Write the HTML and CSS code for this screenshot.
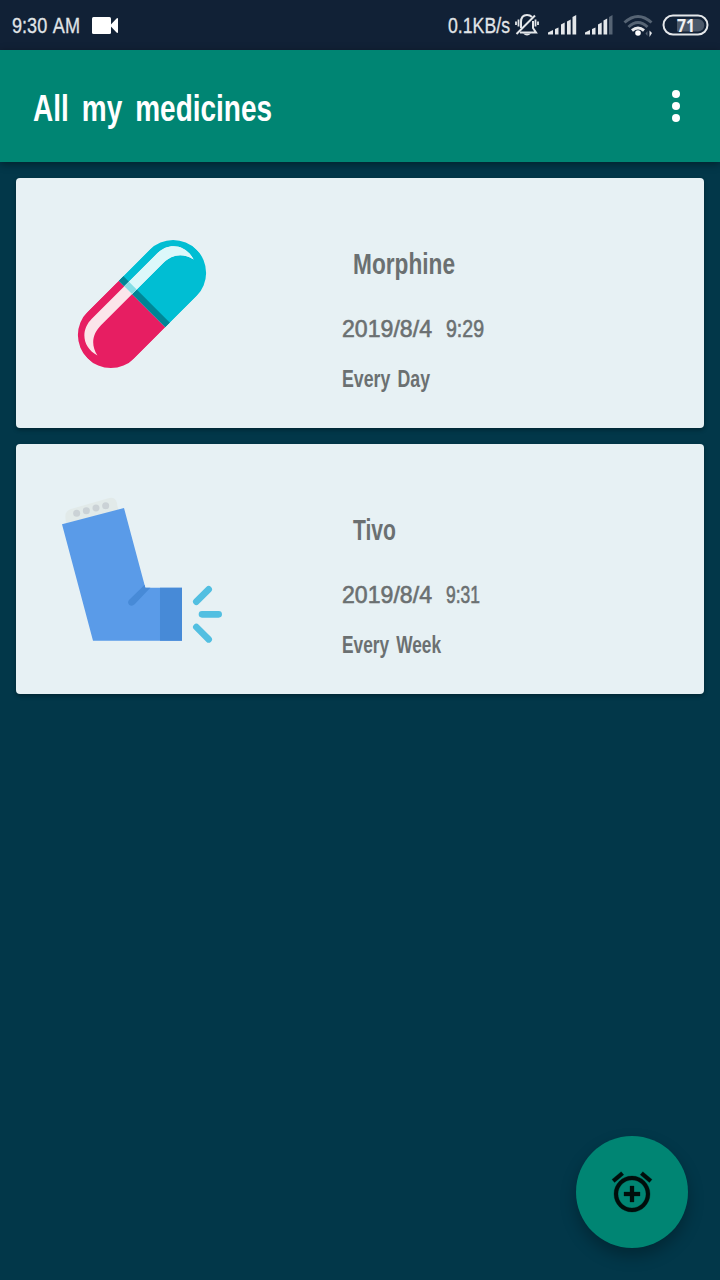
FILE: index.html
```html
<!DOCTYPE html>
<html lang="en">
<head>
<meta charset="utf-8">
<title>All my medicines</title>
<link rel="stylesheet" href="styles.css">
</head>
<body>
<div class="status-bar">
  <svg class="status-time" viewBox="0 0 69 50"><text x="0" y="33" textLength="68" lengthAdjust="spacingAndGlyphs">9:30 AM</text></svg>
  <svg class="camera" viewBox="0 0 26 17"><rect width="19" height="17" rx="1.5"/><path d="M18 8.5 24.5 1.5Q26 .5 26 2V15Q26 16.500 24.500 15.500Z"/></svg>
  <svg class="status-speed" viewBox="0 0 63 50"><text x="0" y="33" textLength="62" lengthAdjust="spacingAndGlyphs">0.1KB/s</text></svg>
  <svg class="status-icons" viewBox="512 0 200 50">
    <g fill="none" stroke="#e4e7ea" stroke-width="2">
      <path d="M516.500 34 535 15.500"/>
      <path d="M521 28V22Q521 15 527 15 530 15 532 17M533 21V28L536 32.500H520"/>
      <path d="M518.500 19.500V26.500M516 21.500V25M535.500 19.500V26.500M538 21.500V25" stroke-width="1.800"/>
    </g>
    <path d="M523 33.500h8q-4 4-8 0" fill="#e4e7ea"/>
    <g fill="#e4e7ea">
      <path d="M548 34.500V32.500L553 30V34.500ZM555 29l3.500-1.500v7H555ZM561 24.500l3.700-2v12H561ZM567 21.500l3.700-2v15H567ZM572.500 17l3.700-2v19.500h-3.700Z"/>
      <path d="M585 34.500V32.500L590 30V34.500ZM592 29l3.500-1.500v7H592ZM598 24.500l3.700-2v12H598ZM603.500 20.500l3.700-2v16h-3.700Z"/>
      <path d="M609 17l3.500-2v19.500H609Z" fill="#566474"/>
    </g>
    <g fill="none" stroke-width="3">
      <path d="M624.500 22.500Q638 10.500 651.500 22.500M628.500 27Q638 18 647.500 27" stroke="#566474"/>
      <path d="M632 30.500Q638 25.500 644 30.500" stroke="#e9ebed"/>
    </g>
    <circle cx="638" cy="33" r="2.800" fill="#fff"/>
    <path d="M647.500 31v5l-2-2.500Z" fill="#566474"/><path d="M649.500 30.500v6.500l2.500-4Z" fill="#e4e7ea"/>
    <rect x="663.500" y="15.500" width="44" height="19" rx="9.500" fill="none" stroke="#e4e7ea" stroke-width="2"/>
    <path d="M677 19H698a6 6 0 0 1 0 12.500H677Z" fill="#4b5869"/>
    <text class="battery" x="677" y="31.500" textLength="18" lengthAdjust="spacingAndGlyphs">71</text>
  </svg>
</div>
<header class="app-bar">
  <svg class="title" viewBox="0 0 240 112"><text x="0" y="71" textLength="239" lengthAdjust="spacingAndGlyphs">All my medicines</text></svg>
  <div class="overflow-menu"><i class="dot"></i><i class="dot"></i><i class="dot"></i></div>
</header>
<main class="list">
  <article class="card">
    <svg class="art" viewBox="16 178 326 250">
      <defs><clipPath id="capsule"><rect x="-33" y="-77" width="66" height="154" rx="33"/></clipPath></defs>
      <g transform="translate(142 304) rotate(45)">
        <g clip-path="url(#capsule)">
          <rect x="-33" y="-77" width="66" height="77" fill="#00bed3"/>
          <rect x="-33" width="66" height="77" fill="#e71e62"/>
          <rect x="-33" y="-6.500" width="66" height="6.500" fill="#008595"/>
        </g>
        <path d="M5-68C-12-73-25-62-25-46V46C-25 62-12 73 5 68-8 65-14 56-14 44V-44C-14-56-8-65 5-68Z" fill="#fbe5ea"/>
        <path d="M5-68C-12-73-25-62-25-46V0H-14V-44C-14-56-8-65 5-68Z" fill="#dcf8fa"/>
        <rect x="-25" y="-6.500" width="11" height="6.500" fill="#86dfe6"/>
      </g>
    </svg>
    <div class="details">
      <svg class="line name" viewBox="0 0 104 32"><text x="0" y="24" textLength="102" lengthAdjust="spacingAndGlyphs">Morphine</text></svg>
      <div class="when">
        <svg class="line date" viewBox="0 0 90 26"><text x="0" y="20" textLength="90" lengthAdjust="spacingAndGlyphs">2019/8/4</text></svg>
        <svg class="line time" viewBox="0 0 38 26"><text x="0" y="20" textLength="38" lengthAdjust="spacingAndGlyphs">9:29</text></svg>
      </div>
      <svg class="line repeat" viewBox="0 0 100 26"><text x="0" y="20" textLength="88" lengthAdjust="spacingAndGlyphs">Every Day</text></svg>
    </div>
  </article>
  <article class="card">
    <svg class="art" viewBox="16 444 326 250">
      <g transform="translate(50 485) scale(.33333)">
        <path d="M48 115 46 96Q45 78 63 72L178 39Q194 35 200 51L205 76Z" fill="#e2eae9"/>
        <g fill="#cbd2d6"><circle cx="80" cy="85" r="10.500"/><circle cx="109" cy="77" r="10.500"/><circle cx="138" cy="69" r="10.500"/><circle cx="167" cy="62" r="10.500"/></g>
        <path d="M36 118 222 69 286 308H396V467H129Z" fill="#5a9be8"/>
        <path d="M330 308H396V467H330Z" fill="#478ad7"/>
        <path d="M284 299 237 345Q231 353 238 360 246 365 254 358L301 308H286Z" fill="#478ad7"/>
        <path d="M439 350 476 313M456 388H506M439 426 476 463" fill="none" stroke="#52bfe1" stroke-width="20" stroke-linecap="round"/>
      </g>
    </svg>
    <div class="details">
      <svg class="line name" viewBox="0 0 104 32"><text x="0" y="24" textLength="43" lengthAdjust="spacingAndGlyphs">Tivo</text></svg>
      <div class="when">
        <svg class="line date" viewBox="0 0 90 26"><text x="0" y="20" textLength="90" lengthAdjust="spacingAndGlyphs">2019/8/4</text></svg>
        <svg class="line time" viewBox="0 0 38 26"><text x="0" y="20" textLength="34" lengthAdjust="spacingAndGlyphs">9:31</text></svg>
      </div>
      <svg class="line repeat" viewBox="0 0 100 26"><text x="0" y="20" textLength="99" lengthAdjust="spacingAndGlyphs">Every Week</text></svg>
    </div>
  </article>
</main>
<div class="fab">
  <svg class="alarm" viewBox="0 0 24 24"><path d="M7.880 3.390 6.600 1.860 2 5.710l1.290 1.530 4.590-3.850zM22 5.720l-4.600-3.860-1.290 1.530 4.600 3.860L22 5.720zM12 4c-4.970 0-9 4.030-9 9s4.020 9 9 9c4.970 0 9-4.030 9-9s-4.030-9-9-9zm0 16c-3.870 0-7-3.130-7-7s3.130-7 7-7 7 3.130 7 7-3.130 7-7 7zm1-11h-2v3H8v2h3v3h2v-3h3v-2h-3V9z"/></svg>
</div>
</body>
</html>
```
FILE: styles.css
```css
* { box-sizing: border-box; }
body {
  margin: 0;
  width: 720px;
  height: 1280px;
  overflow: hidden;
  background: #023749;
  font-family: "Liberation Sans Narrow", "Liberation Sans", sans-serif;
}
svg { display: block; flex: none; overflow: visible; }
.status-bar {
  display: flex;
  align-items: center;
  height: 50px;
  padding-left: 12px;
  background: #112136;
  fill: #e0e4e7;
  font-size: 22px;
}
.status-time { width: 69px; height: 50px; word-spacing: 2px; }
.status-time, .status-speed { stroke: #e0e4e7; stroke-width: .3px; }
.camera { width: 26px; height: 17px; margin-left: 11px; fill: #fff; }
.status-speed { width: 63px; height: 50px; margin-left: 330px; }
.status-icons { width: 200px; height: 50px; margin-left: 1px; }
.battery { font: bold 17.5px "Open Sans", sans-serif; fill: #f2f3f4; }
.app-bar {
  position: relative;
  display: flex;
  justify-content: space-between;
  align-items: center;
  height: 112px;
  padding: 0 40px 0 33px;
  background: #008573;
  box-shadow: 0 2px 8px rgba(0, 0, 0, .4);
}
.title { width: 240px; height: 112px; fill: #fff; font-size: 37px; font-weight: bold; word-spacing: 7px; }
.overflow-menu { display: flex; flex-direction: column; gap: 4px; }
.dot { width: 8px; height: 8px; border-radius: 50%; background: #fff; }
.list { display: flex; flex-direction: column; gap: 16px; padding: 16px; }
.card {
  display: flex;
  height: 250px;
  border-radius: 4px;
  background: #e7f1f4;
  box-shadow: 0 2px 4px rgba(0, 0, 0, .3);
}
.art { width: 326px; height: 250px; }
.details { padding-top: 72px; fill: #6b7071; font-size: 24px; }
.name { width: 104px; height: 32px; margin-left: 11px; font-size: 29px; font-weight: bold; }
.when { display: flex; gap: 14px; margin-top: 35px; stroke: #6b7071; stroke-width: .6px; }
.date { width: 90px; height: 26px; }
.time { width: 38px; height: 26px; }
.repeat { width: 100px; height: 26px; margin-top: 24px; font-weight: bold; font-size: 23px; word-spacing: 3px; }
.fab {
  position: absolute;
  left: 576px;
  top: 1136px;
  display: grid;
  place-items: center;
  width: 112px;
  height: 112px;
  border-radius: 50%;
  background: #008573;
  box-shadow: 0 8px 16px rgba(0, 0, 0, .28);
}
.alarm { width: 48px; height: 48px; fill: #000d0b; stroke: #000d0b; stroke-width: .15px; }
```
